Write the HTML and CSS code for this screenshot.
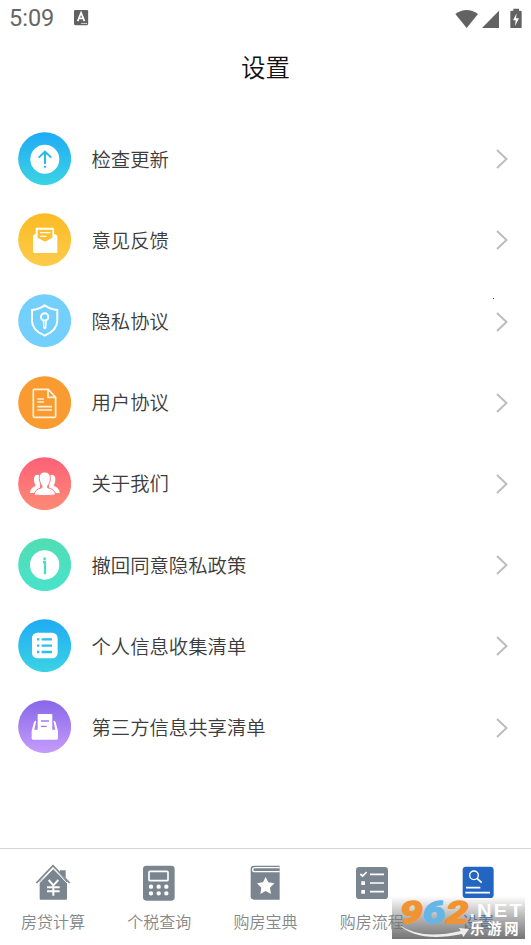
FILE: index.html
```html
<!DOCTYPE html>
<html lang="zh-CN">
<head>
<meta charset="utf-8">
<title>设置</title>
<link rel="stylesheet" href="styles.css">
</head>
<body>
<svg width="0" height="0" class="defs">
  <defs>
    <linearGradient id="blue" x1="0" y1="0" x2="0" y2="1"><stop offset="0" stop-color="#1fabf5"/><stop offset="1" stop-color="#3bd3e4"/></linearGradient>
    <linearGradient id="yellow" x1="0" y1="0" x2="0" y2="1"><stop offset="0" stop-color="#fbbb24"/><stop offset="1" stop-color="#fdcb4b"/></linearGradient>
    <linearGradient id="red" x1="0" y1="0" x2="0" y2="1"><stop offset="0" stop-color="#fd6078"/><stop offset="1" stop-color="#fd8b74"/></linearGradient>
    <linearGradient id="green" x1="0" y1="0" x2="0" y2="1"><stop offset="0" stop-color="#51ddb3"/><stop offset="1" stop-color="#48e3cb"/></linearGradient>
    <linearGradient id="purple" x1="0" y1="0" x2="0" y2="1"><stop offset="0" stop-color="#8767e8"/><stop offset="1" stop-color="#c69cfb"/></linearGradient>
    <linearGradient id="shade" x1="0" y1="0" x2="0" y2="1"><stop offset="0" stop-color="#777" stop-opacity="0"/><stop offset=".5" stop-color="#777" stop-opacity=".55"/><stop offset="1" stop-color="#6c6c6c" stop-opacity=".95"/></linearGradient>
    <linearGradient id="orange" x1="0" y1="0" x2="0" y2="1"><stop offset="0" stop-color="#f7a23c"/><stop offset="1" stop-color="#ee8420"/></linearGradient>
  </defs>
</svg>
<div class="screen">
  <div class="status">
    <span class="clock">5:09</span>
    <svg class="lang" viewBox="222 30 43 46"><rect x="222" y="30" width="42" height="45" rx="4" fill="#626262"/><path d="M233 63l10-25 10 25M237 55h12" fill="none" stroke="#fff" stroke-width="5"/><path d="M244 70h18" stroke="#fff" stroke-width="3" stroke-dasharray="4 2"/></svg>
    <svg class="signals" viewBox="44 20 204 62" fill="#626262"><path d="M45 38Q79 14 113 38L79 80Z"/><path d="M176 28V80H125Z"/><path d="M219 22h17v6h4q4 0 4 4v45q0 4-4 4h-26q-4 0-4-4V32q0-4 4-4h5z"/><path d="M229 36l-11 21h8l-2 17 12-23h-9z" fill="#fff"/></svg>
  </div>
  <h1>设置</h1>
  <ul class="menu">
    <li><svg class="badge" viewBox="53 36 160 160"><circle cx="133" cy="116" r="79.5" fill="url(#blue)"/><circle cx="133.500" cy="118" r="43.500" fill="#fff"/><path d="M134 96v36M134 137v6M115 113l19-18 19 18" fill="none" stroke="#29b9ed" stroke-width="6"/></svg><span>检查更新</span><svg class="arrow" viewBox="0 0 12 20"><path d="M1 1l9.500 9L1 19"/></svg></li>
    <li><svg class="badge" viewBox="53 279 160 160"><circle cx="133" cy="359" r="79.5" fill="url(#yellow)"/><path d="M98 349q0-5 8-8v-15q0-3 3-3h49q3 0 3 3v15q10 3 10 8v46q0 4-4 4h-65q-4 0-4-4z" fill="#fff"/><path d="M112 329h44v24l-22 12-22-12z" fill="#fdbf34"/><path d="M119 338h31M119 349h19" stroke="#fff" stroke-width="4"/></svg><span>意见反馈</span><svg class="arrow" viewBox="0 0 12 20"><path d="M1 1l9.500 9L1 19"/></svg></li>
    <li><svg class="badge" viewBox="53 38 160 160"><circle cx="133" cy="118" r="79.5" fill="#73cffc"/><g fill="none" stroke="#fff" stroke-width="6"><path d="M133 72q17 12 38 14v32q0 28-38 45-38-17-38-45V86q21-2 38-14z"/><circle cx="133" cy="107" r="11"/></g><path d="M127 115h13l-2 26q-5 7-9 0z" fill="#fff"/><path d="M133 119v17" stroke="#73cffc" stroke-width="2"/></svg><span>隐私协议</span><svg class="arrow" viewBox="0 0 12 20"><path d="M1 1l9.500 9L1 19"/></svg></li>
    <li><svg class="badge" viewBox="53 281 160 160"><circle cx="133" cy="361" r="79.5" fill="#f99b30"/><path d="M102 321h42l22 24v57q0 3-3 3h-61q-3 0-3-3v-78q0-3 3-3zM143 322v23h22M111 350h20M111 359h20M111 373h44M111 383h44" fill="none" stroke="#fff3df" stroke-width="5"/></svg><span>用户协议</span><svg class="arrow" viewBox="0 0 12 20"><path d="M1 1l9.500 9L1 19"/></svg></li>
    <li><svg class="badge" viewBox="53 38 160 160"><circle cx="133" cy="118" r="79.5" fill="url(#red)"/><g fill="#fff"><path d="M113 91q-14 0-12 18 1 9 5 15-16 6-17 22h30V95zM153 91q14 0 12 18-1 9-5 15 17 6 18 22h-32V95z"/><path d="M133 83c-12 0-17 9-16 20 1 10 4 17 8 22v5q-22 5-24 22 32 4 65 0-2-17-24-22v-5c5-6 8-13 8-22 1-11-5-20-17-20z" stroke="#fd777a" stroke-width="3"/></g></svg><span>关于我们</span><svg class="arrow" viewBox="0 0 12 20"><path d="M1 1l9.500 9L1 19"/></svg></li>
    <li><svg class="badge" viewBox="53 281 160 160"><circle cx="133" cy="361" r="79.5" fill="url(#green)"/><circle cx="133" cy="362" r="44" fill="#fff"/><circle cx="133" cy="343" r="4.500" fill="#4cddbd"/><path d="M128 353h6v37" fill="none" stroke="#4cddbd" stroke-width="7"/></svg><span>撤回同意隐私政策</span><svg class="arrow" viewBox="0 0 12 20"><path d="M1 1l9.500 9L1 19"/></svg></li>
    <li><svg class="badge" viewBox="53 40 160 160"><circle cx="133" cy="120" r="79.5" fill="url(#blue)"/><rect x="95" y="81" width="77" height="77" rx="16" fill="#fff"/><path d="M110 101h7M124 101h31M110 120h7M124 120h31M110 139h7M124 139h31" stroke="#2dbfec" stroke-width="7"/></svg><span>个人信息收集清单</span><svg class="arrow" viewBox="0 0 12 20"><path d="M1 1l9.500 9L1 19"/></svg></li>
    <li><svg class="badge" viewBox="53 283 160 160"><circle cx="133" cy="363" r="79.5" fill="url(#purple)"/><g fill="#fff"><path d="M112 328q0-3 3-3h38q3 0 3 3v51h-44z"/><path d="M107 345q-5 0-6 5l-7 26v22q0 4 4 4h71q4 0 4-4v-22l-7-26q-1-5-6-5v5l5 22h-63l5-22z"/><path d="M102 375h62v10h-62z"/></g><path d="M122 346h24M122 362h17" stroke="#a27bed" stroke-width="4"/></svg><span>第三方信息共享清单</span><svg class="arrow" viewBox="0 0 12 20"><path d="M1 1l9.500 9L1 19"/></svg></li>
  </ul>
  <nav>
    <a><svg viewBox="100 70 120 120"><path d="M161 88l41 37v52q0 3-3 3h-76q-3 0-3-3v-52zM181 92h17v23l-17-15z" fill="#7b8590"/><path d="M110 130l50-52 50 52" fill="none" stroke="#7b8590" stroke-width="5"/><path d="M116 133l45-46 44 46" fill="none" stroke="#fff" stroke-width="3"/><path d="M147 121l14 16 15-16M161 137v31M142 143h38M142 155h38" fill="none" stroke="#fff" stroke-width="6"/></svg><span>房贷计算</span></a>
    <a><svg viewBox="420 70 120 120"><rect x="432" y="78" width="95" height="105" rx="10" fill="#7b8590"/><rect x="450" y="95" width="57" height="28" rx="3" fill="none" stroke="#fff" stroke-width="5"/><path d="M456 141h.1M479 141h.1M502 141h.1M456 161h.1M479 161h.1M502 161h.1" stroke="#fff" stroke-width="13" stroke-linecap="round"/></svg><span>个税查询</span></a>
    <a><svg viewBox="136 70 120 120"><path d="M163 78h77v102h-77q-10 0-10-10V88q0-10 10-10z" fill="#7b8590"/><path d="M240 84h-74q-7 0-7 6t7 6h74" fill="none" stroke="#fff" stroke-width="4"/><path d="M198 112l8 16 18 3-13 13 3 19-16-9-16 9 3-19-13-13 18-3z" fill="#fff"/></svg><span>购房宝典</span></a>
    <a><svg viewBox="456 70 120 120"><rect x="468" y="82" width="96" height="96" rx="10" fill="#7b8590"/><path d="M481 103l7 6 12-12M510 104h42M510 130h42M510 156h42" fill="none" stroke="#fff" stroke-width="5"/><path d="M484 125h11v11h-11zM484 151h11v11h-11z" fill="#fff"/></svg><span>购房流程</span></a>
    <a class="active"><svg viewBox="233 70 120 120"><rect x="247" y="81" width="93" height="94" rx="10" fill="#2266c2"/><g fill="none" stroke="#fff" stroke-width="4"><circle cx="281" cy="107" r="13"/><path d="M290 116l14 13M257 144h43M255 159h74" stroke-width="5"/></g></svg><span>设置</span></a>
  </nav>
  <i class="speck"></i>
  <svg class="watermark" viewBox="36 168 399 129">
    <path d="M36 168h399v129H36z" fill="url(#shade)"/>
    <path d="M58 255q66 46 184 18l-5-9 30 3-17 24-4-9Q116 309 58 255z" fill="#eee"/>
    <g class="digits"><text x="60" y="248" textLength="68" lengthAdjust="spacingAndGlyphs" fill="#f19330" stroke="#f19330">9</text><text x="128" y="248" textLength="67" lengthAdjust="spacingAndGlyphs" fill="#65b6e7" stroke="#65b6e7">6</text><text x="199" y="248" textLength="66" lengthAdjust="spacingAndGlyphs" fill="#f19330" stroke="#f19330">2</text></g>
    <text class="net" x="268" y="231" textLength="164" lengthAdjust="spacingAndGlyphs">.NET</text>
    <text class="site" x="270" y="281" textLength="146">乐游网</text>
  </svg>
</div>
</body>
</html>
```
FILE: styles.css
```css
* { box-sizing: border-box; }
body { margin: 0; background: #fff; font-family: "Noto Sans CJK SC", sans-serif; }
svg { display: block; flex: none; }
.defs { position: absolute; }
.screen { position: relative; width: 531px; height: 945px; display: flex; flex-direction: column; overflow: hidden; }
.status { height: 36px; display: flex; align-items: center; padding: 0 8px 0 9px; }
.clock { font: 23.5px/37px Roboto, sans-serif; color: #666; width: 65px; }
.lang { width: 14.5px; height: 15.5px; }
.signals { width: 68px; height: 20.7px; margin-left: auto; }
h1 { margin: 0; height: 64px; font-size: 24.5px; font-weight: 350; line-height: 62px; text-align: center; color: #111; }
.menu { list-style: none; margin: 0; padding: 18.1px 23.4px 0 17.6px; }
.menu li { height: 81.2px; display: flex; align-items: center; font-size: 19.35px; font-weight: 350; color: #3c3c3c; }
.menu span { flex: 1; margin: -0.2px 0 0 20.6px; line-height: 28px; }
.badge { width: 53.3px; height: 53.3px; }
.arrow { width: 12px; height: 20px; margin-top: 1px; fill: none; stroke: #bdbdbd; stroke-width: 2; }
nav { margin-top: auto; height: 97px; border-top: 1px solid #d6d6d6; display: grid; grid-template-columns: repeat(5, 1fr); }
nav a { display: flex; flex-direction: column; align-items: center; padding-top: 14.3px; font-size: 16px; font-weight: 350; line-height: 24px; color: #858789; }
nav svg { width: 40px; height: 40px; margin-bottom: 5.5px; }
.active { color: #2266c2; }
.speck { position: absolute; left: 493px; top: 298px; width: 1px; height: 1px; background: #333; }
.watermark { position: absolute; left: 392px; top: 896px; width: 133px; height: 43px; }
.digits { font: italic bold 94px Roboto, sans-serif; stroke-width: 5px; stroke-linejoin: round; }
.net { font: bold 56px "Liberation Sans", sans-serif; fill: #fff; letter-spacing: 6px; }
.site { font: bold 43px "Noto Sans CJK SC", sans-serif; fill: #fff; }
```
